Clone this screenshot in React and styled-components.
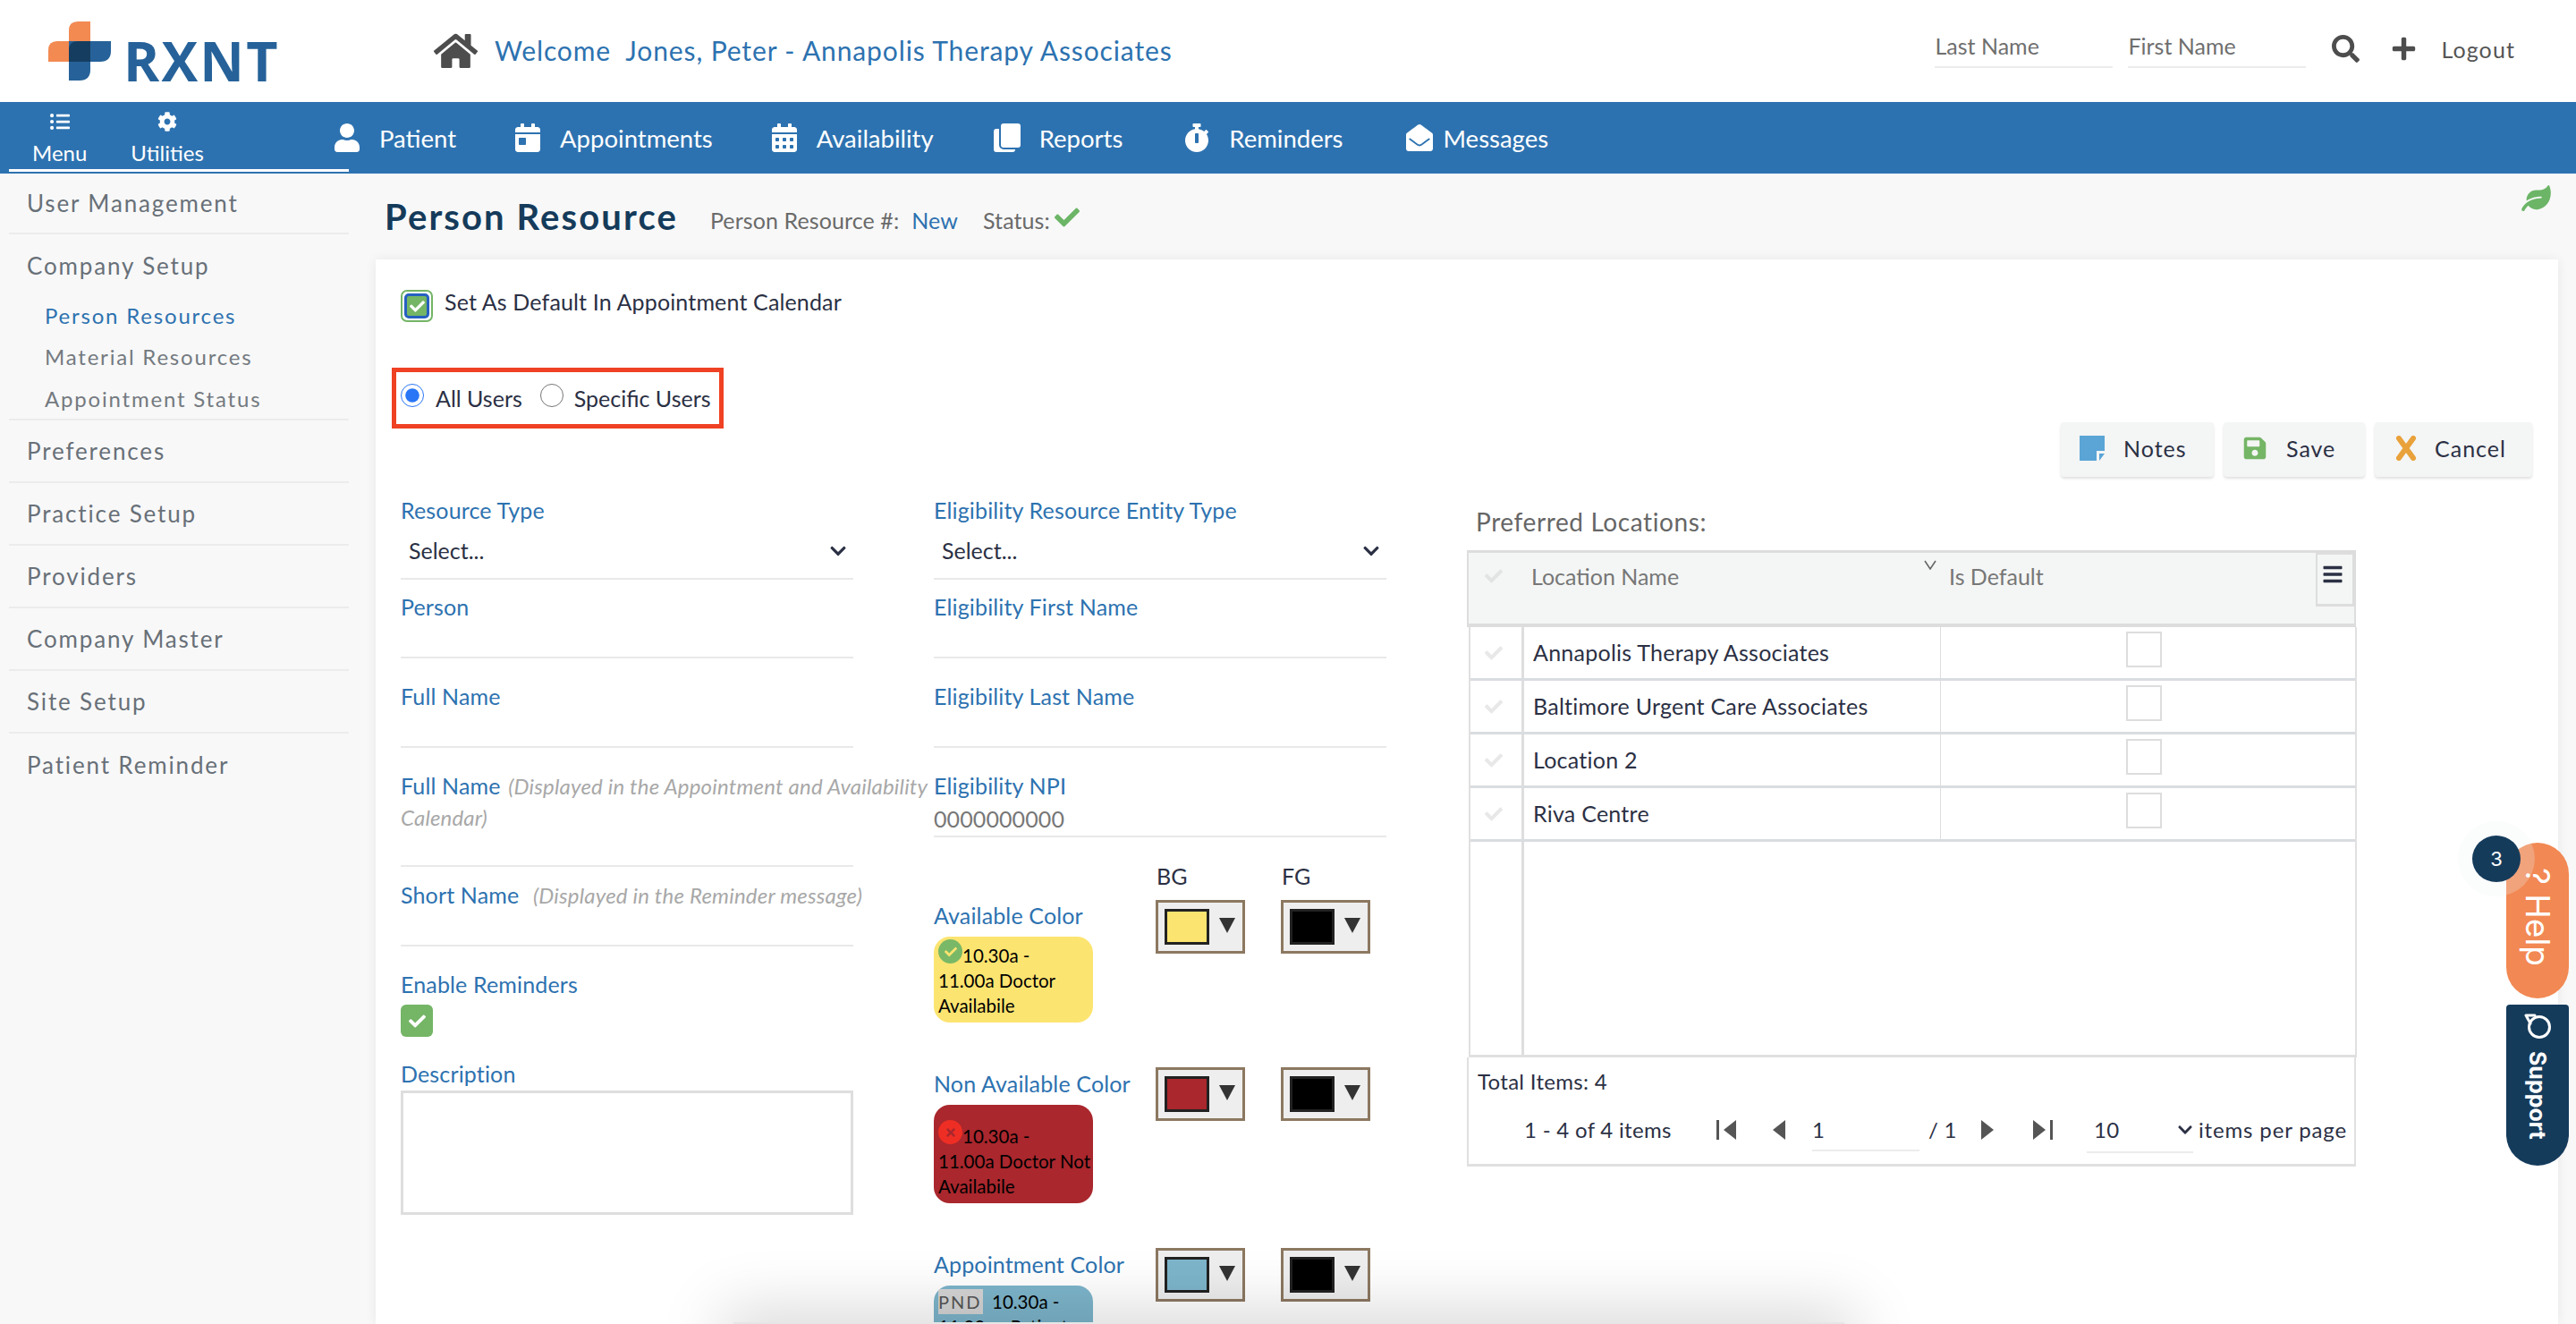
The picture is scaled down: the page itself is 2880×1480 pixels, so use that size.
import React from "react";
import styled, { createGlobalStyle } from "styled-components";
import {
  FaHome, FaSearch, FaPlus, FaListUl, FaCog, FaUser, FaCalendarDay, FaCalendarAlt,
  FaStopwatch, FaEnvelopeOpen, FaCheck, FaLeaf, FaSave, FaTimes, FaChevronDown, FaBars,
} from "react-icons/fa";

const FONT = `"Lato", "Noto Sans", sans-serif`;
const BLUE = "#2d72b0";
const NAVY = "#153b5b";
const INK = "#2b3044";

const Global = createGlobalStyle`
  html, body { margin: 0; padding: 0; background: #f8f8f8; }
  body { font-family: ${FONT}; overflow: hidden; }
  * { box-sizing: border-box; }
`;

const Page = styled.div`
  position: relative;
  width: 2880px;
  height: 1480px;
  overflow: hidden;
  background: #f8f8f8;
  display: flex;
  flex-direction: column;
`;

/* ---------- header ---------- */
const Header = styled.header`
  height: 114px;
  flex: none;
  background: #fff;
  display: flex;
  align-items: center;
  padding: 0 68px 0 54px;
`;
const Logo = styled.div`
  width: 259px;
  flex: none;
  height: 66px;
  display: flex;
  align-items: flex-end;
  gap: 14px;
`;
const LogoText = styled.span`
  font-family: "Open Sans", sans-serif;
  font-weight: 700;
  font-size: 61px;
  line-height: 44px;
  height: 44px;
  letter-spacing: 2.2px;
  color: #266299;
  display: block;
`;
const Home = styled(FaHome)`
  width: 49px;
  height: 44px;
  color: #4d4d4d;
  margin-left: 172px;
  flex: none;
`;
const Welcome = styled.div`
  margin: 0 0 3px 19px;
  font-size: 30px;
  letter-spacing: 0.88px;
  color: ${BLUE};
  white-space: pre;
`;
const SearchBlock = styled.div`
  margin-left: auto;
  display: flex;
  align-items: center;
`;
const SearchField = styled.div`
  width: 199px;
  height: 38px;
  margin-right: 17px;
  border-bottom: 2px solid #ececec;
  font-size: 25px;
  line-height: 27px;
  color: #6f6f6f;
`;
const HeadIcon = styled.span`
  display: flex;
  color: #4d4d4d;
  font-size: ${(p) => p.$size}px;
  margin-left: ${(p) => p.$ml}px;
  margin-bottom: 6px;
`;
const Logout = styled.span`
  margin: 0 0 5px 27px;
  font-size: 25px;
  letter-spacing: 1.1px;
  color: #555;
`;

/* ---------- nav ---------- */
const Nav = styled.nav`
  height: 80px;
  flex: none;
  background: ${BLUE};
  display: flex;
  padding-left: 10px;
  color: #fff;
`;
const MenuGroup = styled.div`
  width: 380px;
  height: 78px;
  flex: none;
  display: flex;
  border-bottom: 3px solid #fff;
  padding-left: 26px;
  gap: 49px;
`;
const MenuItem = styled.div`
  display: flex;
  flex-direction: column;
  align-items: center;
  padding-top: 11px;
  font-size: 24px;
  line-height: 32px;
  svg { height: 22px; width: 24px; margin-bottom: 8px; }
`;
const NavList = styled.div`
  display: flex;
  align-items: center;
  margin-left: -17px;
  gap: 65px;
  font-size: 27.5px;
`;
const NavItem = styled.div`
  display: flex;
  align-items: center;
  gap: ${(p) => p.$gap || 21}px;
  margin-left: ${(p) => p.$ml || 0}px;
  svg { height: 32px; width: 30px; flex: none; }
`;

/* ---------- body ---------- */
const Body = styled.div`
  flex: 1;
  display: flex;
  min-height: 0;
`;
const Sidebar = styled.aside`
  width: 380px;
  margin-left: 10px;
  flex: none;
`;
const SideItem = styled.div`
  height: ${(p) => p.$h || 70}px;
  padding-left: 20px;
  border-bottom: 2px solid #ececec;
  display: flex;
  align-items: center;
  font-size: 26px;
  letter-spacing: 1.85px;
  color: #687078;
`;
const SideGroup = styled.div`
  height: 208px;
  border-bottom: 2px solid #ececec;
`;
const SideGroupTitle = styled(SideItem)`
  border-bottom: 0;
`;
const SubItem = styled.div`
  height: 46.5px;
  padding-left: 40px;
  margin-top: ${(p) => p.$mt || 0}px;
  display: flex;
  align-items: center;
  font-size: 24px;
  letter-spacing: 1.8px;
  color: ${(p) => (p.$active ? BLUE : "#747a80")};
`;

const Main = styled.main`
  flex: 1;
  min-width: 0;
  padding: 0 20px 0 30px;
  display: flex;
  flex-direction: column;
`;
const PageHead = styled.div`
  height: 96px;
  flex: none;
  padding: 0 8px 0 10px;
  display: flex;
  align-items: center;
`;
const Title = styled.h1`
  margin: 0 36px 0 0;
  font-size: 40px;
  font-weight: 700;
  letter-spacing: 2.1px;
  color: ${NAVY};
`;
const Meta = styled.span`
  font-size: 25px;
  letter-spacing: 0.1px;
  margin-top: 8px;
  color: ${(p) => (p.$blue ? BLUE : "#6a6a6a")};
  margin-left: ${(p) => p.$ml || 0}px;
`;
const StatusCheck = styled(FaCheck)`
  width: 30px;
  height: 28px;
  margin: 2px 0 0 4px;
  color: #6cb567;
`;
const Leaf = styled(FaLeaf)`
  width: 33px;
  height: 29px;
  margin-left: auto;
  align-self: flex-start;
  margin-top: 13px;
  color: #6cb567;
`;
const Card = styled.section`
  flex: 1;
  min-height: 0;
  background: #fff;
  box-shadow: 0 0 12px rgba(0, 0, 0, 0.07);
  padding-left: 28px;
`;
const TopRow = styled.div`
  height: 243px;
  display: flex;
  justify-content: space-between;
`;
const DefaultRow = styled.div`
  display: flex;
  align-items: flex-start;
  margin-top: 34px;
  gap: 13px;
  font-size: 25px;
  letter-spacing: 0.15px;
  line-height: 26px;
  color: ${INK};
`;
const FancyCheck = styled.span`
  width: 36px;
  height: 36px;
  flex: none;
  border: 2px solid #74b566;
  border-radius: 7px;
  padding: 2px;
  display: flex;
`;
const FancyInner = styled.span`
  flex: 1;
  border: 3px solid #2660c2;
  background: #74b566;
  border-radius: 5px;
  display: flex;
  align-items: center;
  justify-content: center;
  color: #fff;
  font-size: 17px;
`;
const RadioBox = styled.div`
  width: 371px;
  height: 68px;
  margin: 51px 0 0 -10px;
  border: 5px solid #ef4123;
  padding-left: 5px;
  display: flex;
  align-items: center;
  font-size: 25px;
  color: ${INK};
`;
const Radio = styled.input.attrs({ type: "radio" })`
  width: 26px;
  height: 26px;
  margin: -6px ${(p) => p.$gap}px 0 ${(p) => p.$ml || 0}px;
  accent-color: #2a76f6;
  flex: none;
`;
const Toolbar = styled.div`
  display: flex;
  gap: 11px;
  margin: 182px 29px 0 0;
`;
const Button = styled.div`
  width: ${(p) => p.$w}px;
  height: 61px;
  padding: 0 0 3px 21px;
  display: flex;
  align-items: center;
  gap: ${(p) => p.$gap || 21}px;
  background: #f4f5f5;
  border-radius: 4px;
  box-shadow: 0 2px 3px rgba(0, 0, 0, 0.12);
  font-size: 25px;
  letter-spacing: 1px;
  color: ${INK};
  svg { width: 28px; height: 28px; flex: none; }
`;

/* ---------- form ---------- */
const Columns = styled.div`
  display: flex;
  gap: 90px;
  margin-top: 22px;
  align-items: flex-start;
`;
const Col = styled.div`
  width: 506px;
  flex: none;
`;
const Field = styled.div`
  display: flow-root;
  height: ${(p) => p.$h}px;
  margin-top: ${(p) => p.$mt || 0}px;
  border-bottom: 2px solid #e9e9e9;
`;
const Label = styled.div`
  font-size: 25px;
  line-height: 34px;
  margin: -2px 0 2px;
  color: ${BLUE};
  white-space: nowrap;
  letter-spacing: 0.15px;
`;
const BlockLabel = styled(Label)`
  margin-top: ${(p) => p.$mt}px;
`;
const ColorLabel = styled(Label)`
  margin: 0;
`;
const Hint = styled.i`
  font-size: 24px;
  letter-spacing: 0.2px;
  margin-left: ${(p) => p.$ml || 2}px;
  color: #a8a8a8;
`;
const HintLine = styled.i`
  font-size: 24px;
  color: #a8a8a8;
`;
const SelectRow = styled.div`
  display: flex;
  align-items: center;
  justify-content: space-between;
  padding: 0 7px 0 9px;
  height: 44px;
  margin-top: 6px;
  font-size: 25px;
  color: ${INK};
  svg { width: 20px; height: 20px; margin-top: 2px; }
`;
const Value = styled.div`
  font-size: 25px;
  line-height: 36px;
  color: #777;
  letter-spacing: 0.1px;
`;
const GreenCheck = styled.span`
  display: flex;
  align-items: center;
  justify-content: center;
  width: 36px;
  height: 36px;
  margin: 6px 0 26px;
  background: #74b566;
  border-radius: 6px;
  color: #fff;
  font-size: 19px;
`;
const TextArea = styled.div`
  height: 139px;
  border: 3px solid #dedede;
`;
const ColorHead = styled.div`
  display: flex;
  padding-left: 249px;
  margin-top: 26px;
  font-size: 25px;
  line-height: 34px;
  color: ${INK};
  span { width: 140px; flex: none; }
`;
const ColorRow = styled.div`
  display: flex;
  margin-top: ${(p) => p.$mt}px;
`;
const ColorInfo = styled.div`
  width: 248px;
  flex: none;
  padding-top: ${(p) => p.$pt || 0}px;
`;
const Pickers = styled.div`
  display: flex;
  gap: 40px;
`;
const Picker = styled.div`
  width: 100px;
  height: 60px;
  background: #eee;
  border: 3px solid #8c7861;
  display: flex;
  align-items: center;
  padding-left: 7px;
  gap: 11px;
`;
const Swatch = styled.span`
  width: 50px;
  height: 40px;
  border: 3px solid #222;
  background: ${(p) => p.$c};
`;
const Caret = styled.span`
  width: 0;
  height: 0;
  border-left: 9px solid transparent;
  border-right: 9px solid transparent;
  border-top: 17px solid #333;
  margin-bottom: 4px;
`;
const Badge = styled.div`
  width: 178px;
  height: ${(p) => p.$h}px;
  margin-top: 7px;
  padding: ${(p) => p.$pt}px 0 0 5px;
  background: ${(p) => p.$bg};
  border-radius: 18px;
  font-size: 20.5px;
  line-height: 28px;
  color: #000;
  white-space: nowrap;
  overflow: hidden;
`;
const StatusDot = styled.span`
  display: inline-flex;
  align-items: center;
  justify-content: center;
  width: 27px;
  height: 27px;
  border-radius: 50%;
  background: ${(p) => p.$bg};
  color: ${(p) => p.$fg};
  font-size: 14px;
  vertical-align: top;
  margin-top: -4px;
`;
const Pnd = styled.span`
  display: inline-block;
  width: 50px;
  height: 28px;
  margin-right: 10px;
  background: #d5d5d5;
  color: #555;
  letter-spacing: 2px;
  font-size: 20px;
`;

/* ---------- grid ---------- */
const Section = styled.div`
  width: 995px;
  flex: none;
`;
const SectionTitle = styled.div`
  margin: 10px 0 14px 10px;
  font-size: 28px;
  line-height: 36px;
  color: #666;
  letter-spacing: 0.6px;
`;
const GridHead = styled.div`
  height: 86px;
  width: 994px;
  background: #f4f6f5;
  border: solid #ddd;
  border-width: 3px 2px 4px;
  display: flex;
  font-size: 25px;
  color: #777;
`;
const HeadCell = styled.div`
  width: ${(p) => p.$w}px;
  flex: none;
  height: 51px;
  padding-left: ${(p) => p.$pl}px;
  display: flex;
  align-items: center;
  position: relative;
  svg { color: #e2e4e4; font-size: 20px; }
`;
const SortMark = styled.svg`
  position: absolute;
  right: 14px;
  top: 8px;
  width: 14px;
  height: 11px;
`;
const GridMenu = styled.div`
  margin-left: auto;
  width: 43px;
  height: 60px;
  border: 2px solid #ddd;
  border-bottom-width: 3px;
  display: flex;
  justify-content: center;
  padding: 10px 5px 0 0;
  color: ${INK};
  font-size: 24px;
`;
const GridBody = styled.div`
  margin-left: 2px;
  width: 993px;
  height: 481px;
  border: solid #e0e0e0;
  border-width: 0 2px 3px;
  display: flex;
  flex-direction: column;
`;
const Row = styled.div`
  height: 60px;
  flex: none;
  display: flex;
  border-bottom: 3px solid #d9dce0;
  font-size: 25px;
  letter-spacing: 0.25px;
  color: ${INK};
`;
const TickCell = styled.div`
  width: 60px;
  flex: none;
  border-right: 3px solid #dedede;
  display: flex;
  align-items: center;
  justify-content: center;
  padding-right: 6px;
  color: #e8e8e8;
  font-size: 20px;
`;
const NameCell = styled.div`
  width: 466px;
  flex: none;
  padding: 0 0 2px 10px;
  display: flex;
  align-items: center;
  border-right: 1px solid #dedede;
`;
const DefaultCell = styled.div`
  flex: 1;
  display: flex;
  justify-content: center;
  padding: 5px 10px 0 0;
`;
const Box = styled.span`
  width: 40px;
  height: 40px;
  border: 2px solid #ddd;
`;
const Filler = styled.div`
  flex: 1;
  display: flex;
`;
const FillerTick = styled.div`
  width: 60px;
  border-right: 3px solid #dedede;
`;
const GridFoot = styled.div`
  width: 994px;
  height: 122px;
  border: solid #e0e0e0;
  border-width: 0 2px 3px;
  padding: 10px 0 0 10px;
  font-size: 24px;
  letter-spacing: 0.3px;
  line-height: 34px;
  color: ${INK};
`;
const Pager = styled.div`
  display: flex;
  align-items: flex-start;
  margin: 20px 0 0 52px;
  white-space: nowrap;
`;
const PagerCell = styled.div`
  width: ${(p) => p.$w}px;
  height: 34px;
  flex: none;
  display: flex;
  align-items: center;
  letter-spacing: ${(p) => p.$ls || 0.3}px;
  svg { height: 22px; width: 24px; fill: #555; }
`;
const PagerInput = styled.div`
  width: ${(p) => p.$w}px;
  height: ${(p) => p.$h}px;
  flex: none;
  margin-right: ${(p) => p.$mr}px;
  border-bottom: 2px solid #ececec;
  display: flex;
  align-items: flex-start;
  justify-content: space-between;
  padding-left: ${(p) => p.$pl || 0}px;
  svg { width: 18px; height: 18px; margin-top: 8px; }
`;

/* ---------- floating ---------- */
const Tabs = styled.div`
  position: absolute;
  left: 2802px;
  top: 942px;
  width: 70px;
  display: flex;
  flex-direction: column;
  gap: 7px;
  color: #fff;
  font-family: "Inter", sans-serif;
`;
const HelpTab = styled.div`
  height: 174px;
  background: #f28853;
  border-radius: 35px;
  display: flex;
  justify-content: flex-start;
  padding-top: 28px;
  writing-mode: vertical-rl;
  align-items: center;
  font-size: 37px;
  line-height: 36px;
  white-space: pre;
`;
const SupportTab = styled.div`
  height: 180px;
  background: ${NAVY};
  border-radius: 4px 4px 35px 35px;
  display: flex;
  flex-direction: column;
  align-items: center;
  padding-top: 10px;
  gap: 14px;
`;
const SupportText = styled.span`
  writing-mode: vertical-rl;
  font-size: 25px;
  font-weight: 700;
  line-height: 26px;
`;
const CountBadge = styled.div`
  position: absolute;
  left: 2764px;
  top: 934px;
  width: 54px;
  height: 52px;
  border-radius: 50%;
  background: ${NAVY};
  box-shadow: 0 0 0 16px rgba(240, 245, 245, 0.25);
  display: flex;
  align-items: center;
  justify-content: center;
  color: #fff;
  font-family: "Inter", sans-serif;
  font-size: 22px;
`;
const BottomSheet = styled.div`
  position: absolute;
  left: 820px;
  top: 1478px;
  width: 1242px;
  height: 40px;
  background: #e6e6e6;
  box-shadow: 0 0 70px 12px rgba(0, 0, 0, 0.17);
`;

/* ---------- drawings ---------- */
const LogoMark = () => (
  <svg width="70" height="66" viewBox="0 0 70 66" style={{ flex: "none" }}>
    <path d="M47 0H33Q23 0 23 10V22H10Q0 22 0 32V45H47Z" fill="#f28a52" />
    <path d="M23 22H70V33Q70 45 58 45H47V54Q47 66 35 66H23Z" fill="#266299" />
    <path d="M23 45V32Q23 22 33 22H47V45Z" fill="#153d60" />
  </svg>
);
const ReportsIcon = () => (
  <svg viewBox="0 0 30 32" fill="#fff">
    <path d="M8 3a3 3 0 0 1 3-3h16a3 3 0 0 1 3 3v21a3 3 0 0 1-3 3H11a3 3 0 0 1-3-3z" />
    <path d="M0 9a3 3 0 0 1 3-3h3v18a5 5 0 0 0 5 5h13a3 3 0 0 1-3 3H3a3 3 0 0 1-3-3z" />
  </svg>
);
const NoteIcon = () => (
  <svg viewBox="0 0 28 28">
    <path d="M0 0H28V17H19V28H0Z" fill="#5aa5d6" />
    <path d="M22 20H28L22 28Z" fill="#5aa5d6" />
  </svg>
);
const CancelIcon = () => (
  <svg viewBox="0 0 24 28" fill="none" stroke="#e9a23b" strokeWidth="6" strokeLinecap="round">
    <path d="M4 3L20 25M20 3L4 25" />
  </svg>
);
const ChatIcon = () => (
  <svg width="30" height="28" viewBox="0 0 30 28" fill="none" stroke="#fff" strokeWidth="3">
    <circle cx="17" cy="15" r="11.5" />
    <path d="M2 2H12M2 2L7 11" strokeLinecap="round" />
  </svg>
);
const FirstIcon = () => (
  <svg viewBox="0 0 24 22"><path d="M0 0h3v22H0zM22 0v22L8 11z" /></svg>
);
const PrevIcon = () => (
  <svg viewBox="0 0 24 22"><path d="M16 0v22L2 11z" /></svg>
);
const NextIcon = () => (
  <svg viewBox="0 0 24 22"><path d="M2 0v22l14-11z" /></svg>
);
const LastIcon = () => (
  <svg viewBox="0 0 24 22"><path d="M21 0h3v22h-3zM2 0v22l14-11z" /></svg>
);

const LOCATIONS = [
  "Annapolis Therapy Associates",
  "Baltimore Urgent Care Associates",
  "Location 2",
  "Riva Centre",
];

const ColorPickers = ({ bg }) => (
  <Pickers>
    <Picker><Swatch $c={bg} /><Caret /></Picker>
    <Picker><Swatch $c="#000" /><Caret /></Picker>
  </Pickers>
);

export default function App() {
  return (
    <Page>
      <Global />
      <Header>
        <Logo>
          <LogoMark />
          <LogoText>RXNT</LogoText>
        </Logo>
        <Home />
        <Welcome>Welcome  Jones, Peter - Annapolis Therapy Associates</Welcome>
        <SearchBlock>
          <SearchField>Last Name</SearchField>
          <SearchField>First Name</SearchField>
          <HeadIcon $size={31} $ml={12}><FaSearch /></HeadIcon>
          <HeadIcon $size={29} $ml={35}><FaPlus /></HeadIcon>
          <Logout>Logout</Logout>
        </SearchBlock>
      </Header>

      <Nav>
        <MenuGroup>
          <MenuItem><FaListUl />Menu</MenuItem>
          <MenuItem><FaCog />Utilities</MenuItem>
        </MenuGroup>
        <NavList>
          <NavItem><FaUser />Patient</NavItem>
          <NavItem><FaCalendarDay />Appointments</NavItem>
          <NavItem><FaCalendarAlt />Availability</NavItem>
          <NavItem $ml={2}><ReportsIcon />Reports</NavItem>
          <NavItem $ml={3}><FaStopwatch />Reminders</NavItem>
          <NavItem $ml={5} $gap={12}><FaEnvelopeOpen />Messages</NavItem>
        </NavList>
      </Nav>

      <Body>
        <Sidebar>
          <SideItem $h={68}>User Management</SideItem>
          <SideGroup>
            <SideGroupTitle>Company Setup</SideGroupTitle>
            <SubItem $mt={-3} $active>Person Resources</SubItem>
            <SubItem>Material Resources</SubItem>
            <SubItem>Appointment Status</SubItem>
          </SideGroup>
          <SideItem>Preferences</SideItem>
          <SideItem>Practice Setup</SideItem>
          <SideItem>Providers</SideItem>
          <SideItem>Company Master</SideItem>
          <SideItem>Site Setup</SideItem>
          <SideGroupTitle>Patient Reminder</SideGroupTitle>
        </Sidebar>

        <Main>
          <PageHead>
            <Title>Person Resource</Title>
            <Meta>Person Resource #:</Meta>
            <Meta $blue $ml={14}>New</Meta>
            <Meta $ml={28}>Status:</Meta>
            <StatusCheck />
            <Leaf />
          </PageHead>

          <Card>
            <TopRow>
              <div>
                <DefaultRow>
                  <FancyCheck><FancyInner><FaCheck /></FancyInner></FancyCheck>
                  Set As Default In Appointment Calendar
                </DefaultRow>
                <RadioBox>
                  <Radio name="users" defaultChecked $gap={13} />
                  All Users
                  <Radio name="users" $gap={12} $ml={20} />
                  Specific Users
                </RadioBox>
              </div>
              <Toolbar>
                <Button $w={171}><NoteIcon />Notes</Button>
                <Button $w={158}><FaSave color="#74b566" />Save</Button>
                <Button $w={176} $gap={18}><CancelIcon />Cancel</Button>
              </Toolbar>
            </TopRow>

            <Columns>
              <Col>
                <Field $h={93}>
                  <Label>Resource Type</Label>
                  <SelectRow>Select...<FaChevronDown /></SelectRow>
                </Field>
                <Field $h={73} $mt={15}><Label>Person</Label></Field>
                <Field $h={73} $mt={27}><Label>Full Name</Label></Field>
                <Field $h={106} $mt={27}>
                  <Label>
                    Full Name <Hint>(Displayed in the Appointment and Availability</Hint>
                    <br />
                    <HintLine>Calendar)</HintLine>
                  </Label>
                </Field>
                <Field $h={73} $mt={16}>
                  <Label>Short Name <Hint $ml={9}>(Displayed in the Reminder message)</Hint></Label>
                </Field>
                <BlockLabel $mt={25}>Enable Reminders</BlockLabel>
                <GreenCheck><FaCheck /></GreenCheck>
                <Label>Description</Label>
                <TextArea />
              </Col>

              <Col>
                <Field $h={93}>
                  <Label>Eligibility Resource Entity Type</Label>
                  <SelectRow>Select...<FaChevronDown /></SelectRow>
                </Field>
                <Field $h={73} $mt={15}><Label>Eligibility First Name</Label></Field>
                <Field $h={73} $mt={27}><Label>Eligibility Last Name</Label></Field>
                <Field $h={73} $mt={27}>
                  <Label>Eligibility NPI</Label>
                  <Value>0000000000</Value>
                </Field>
                <ColorHead><span>BG</span><span>FG</span></ColorHead>
                <ColorRow $mt={10}>
                  <ColorInfo>
                    <ColorLabel>Available Color</ColorLabel>
                    <Badge $bg="#fce470" $h={96} $pt={7}>
                      <StatusDot $bg="#79b866" $fg="#fce470"><FaCheck /></StatusDot>10.30a -<br />
                      11.00a Doctor<br />Availabile
                    </Badge>
                  </ColorInfo>
                  <ColorPickers bg="#fce470" />
                </ColorRow>
                <ColorRow $mt={50}>
                  <ColorInfo $pt={1}>
                    <ColorLabel>Non Available Color</ColorLabel>
                    <Badge $bg="#a9272d" $h={110} $pt={21}>
                      <StatusDot $bg="#ee2e24" $fg="#a9272d"><FaTimes /></StatusDot>10.30a -<br />
                      11.00a Doctor Not<br />Availabile
                    </Badge>
                  </ColorInfo>
                  <ColorPickers bg="#a9272d" />
                </ColorRow>
                <ColorRow $mt={50}>
                  <ColorInfo $pt={1}>
                    <ColorLabel>Appointment Color</ColorLabel>
                    <Badge $bg="#7db5cb" $h={96} $pt={4}>
                      <Pnd>PND</Pnd>10.30a -<br />11.00a - Patient
                    </Badge>
                  </ColorInfo>
                  <ColorPickers bg="#7db5cb" />
                </ColorRow>
              </Col>

              <Section>
                <SectionTitle>Preferred Locations:</SectionTitle>
                <GridHead>
                  <HeadCell $w={70} $pl={18}><FaCheck /></HeadCell>
                  <HeadCell $w={467} $pl={0}>
                    Location Name
                    <SortMark viewBox="0 0 14 11" fill="none" stroke="#666" strokeWidth="1.6">
                      <path d="M1 1l6 9 6-9" />
                    </SortMark>
                  </HeadCell>
                  <HeadCell $w={300} $pl={0}>Is Default</HeadCell>
                  <GridMenu><FaBars /></GridMenu>
                </GridHead>
                <GridBody>
                  {LOCATIONS.map((name) => (
                    <Row key={name}>
                      <TickCell><FaCheck /></TickCell>
                      <NameCell>{name}</NameCell>
                      <DefaultCell><Box /></DefaultCell>
                    </Row>
                  ))}
                  <Filler><FillerTick /></Filler>
                </GridBody>
                <GridFoot>
                  Total Items: 4
                  <Pager>
                    <PagerCell $w={215}>1 - 4 of 4 items</PagerCell>
                    <PagerCell $w={61}><FirstIcon /></PagerCell>
                    <PagerCell $w={46}><PrevIcon /></PagerCell>
                    <PagerInput $w={120} $h={41} $mr={10}>1</PagerInput>
                    <PagerCell $w={57}>/ 1</PagerCell>
                    <PagerCell $w={58}><NextIcon /></PagerCell>
                    <PagerCell $w={62}><LastIcon /></PagerCell>
                    <PagerInput $w={119} $h={43} $mr={6} $pl={8}>10<FaChevronDown /></PagerInput>
                    <PagerCell $w={170} $ls={0.85}>items per page</PagerCell>
                  </Pager>
                </GridFoot>
              </Section>
            </Columns>
          </Card>
        </Main>
      </Body>

      <BottomSheet />
      <Tabs>
        <HelpTab>{"? Help"}</HelpTab>
        <SupportTab><ChatIcon /><SupportText>Support</SupportText></SupportTab>
      </Tabs>
      <CountBadge>3</CountBadge>
    </Page>
  );
}
